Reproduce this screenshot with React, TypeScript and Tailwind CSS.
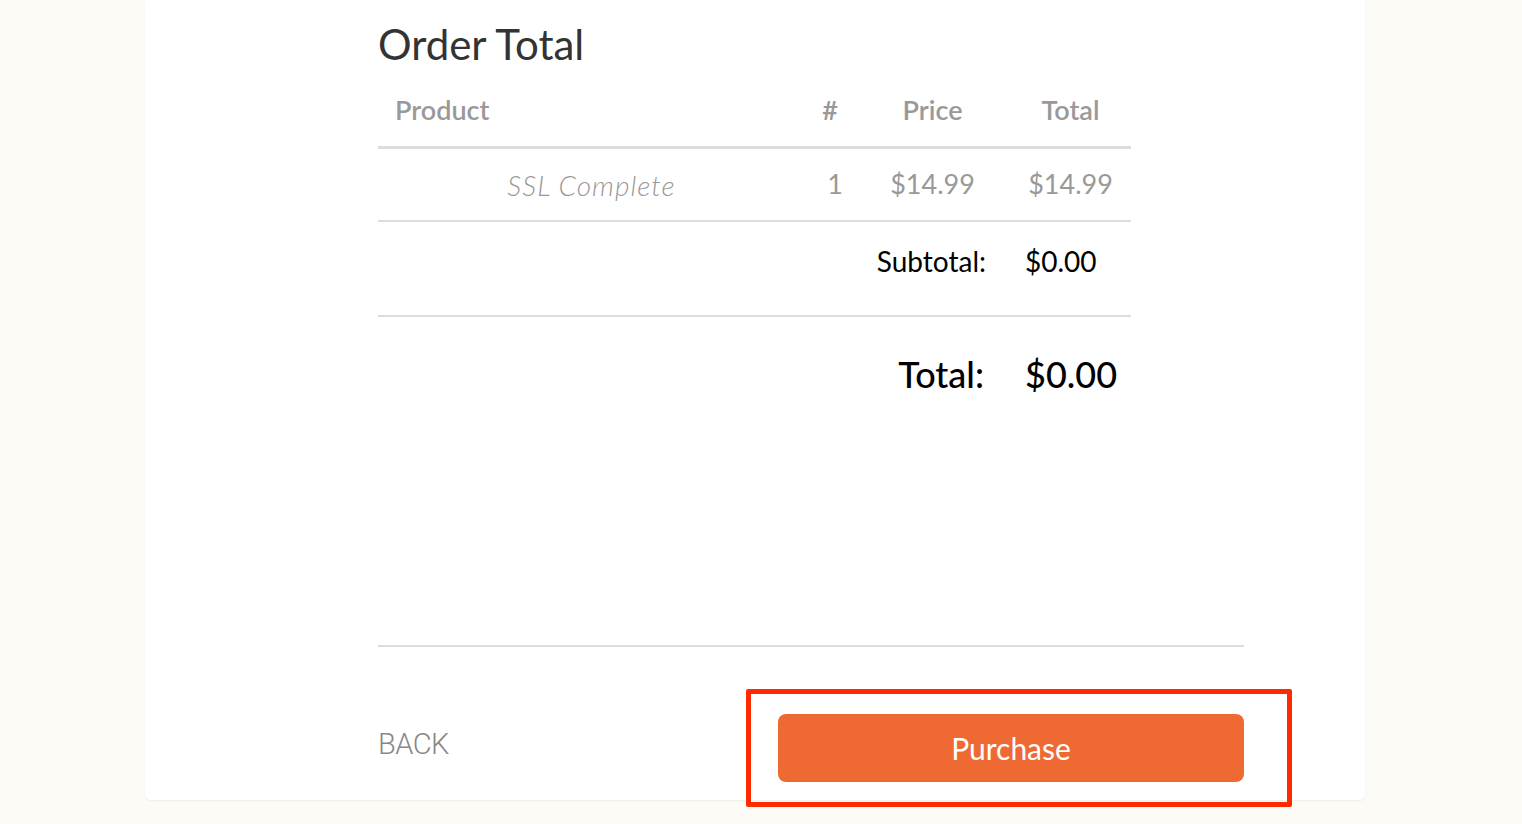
import React from 'react';

const font = { fontFamily: 'Lato, "Open Sans", sans-serif' };

export default function App() {
  return (
    <div className="min-h-[824px] w-full bg-[#fcfbf6]" style={font}>
      <div className="ml-[145px] w-[1220px] rounded-b-md bg-white pl-[233px] pr-[121px] pb-[18px] shadow-[0_1px_2px_rgba(0,0,0,0.06)]">
        <h1 className="pt-[18px] text-[42px] leading-[52px] font-normal text-[#333]">Order Total</h1>

        <div className="w-[753px]">
          <div className="grid grid-cols-[427px_50px_155px_121px] border-b-[3px] border-[#dcdcdc] text-[27px] font-semibold text-[#999] h-[79px] pt-[4px] items-center">
            <div className="pl-[17px]">Product</div>
            <div className="text-center">#</div>
            <div className="text-center">Price</div>
            <div className="text-center">Total</div>
          </div>

          <div className="grid grid-cols-[427px_50px_155px_121px] border-b-2 border-[#dcdcdc] text-[27px] text-[#999] h-[73px] items-center">
            <div className="text-center italic font-light text-[28px] tracking-[1px]">SSL Complete</div>
            <div className="text-center pl-[10px]">1</div>
            <div className="text-center">$14.99</div>
            <div className="text-center">$14.99</div>
          </div>

          <div className="grid grid-cols-[427px_50px_155px_121px] border-b-2 border-[#dcdcdc] text-[28px] text-black h-[95px] pb-[16px] items-center">
            <div />
            <div />
            <div className="text-right pr-[24px]">Subtotal:</div>
            <div className="pl-[15px]">$0.00</div>
          </div>

          <div className="grid grid-cols-[427px_50px_155px_121px] text-[36px] font-medium text-black h-[114px] items-center">
            <div />
            <div />
            <div className="text-right pr-[26px]">Total:</div>
            <div className="pl-[15px]">$0.00</div>
          </div>
        </div>

        <div className="mt-[214px] border-t-2 border-[#dcdcdc]" />

        <div className="flex items-center justify-between pt-[67px]">
          <button className="mt-[-6px] text-[29px] font-light text-[#888] tracking-[-0.5px]" style={{ fontFamily: 'Roboto, "Liberation Sans", sans-serif' }}>
            BACK
          </button>
          <div className="relative">
            <button className="h-[68px] w-[466px] rounded-lg bg-[#ef6a33] text-[30px] font-normal text-white">
              Purchase
            </button>
            <div className="pointer-events-none absolute left-[-32px] top-[-25px] h-[118px] w-[546px] rounded-[2px] border-[5px] border-[#ff2a00]" />
          </div>
        </div>
      </div>
    </div>
  );
}
